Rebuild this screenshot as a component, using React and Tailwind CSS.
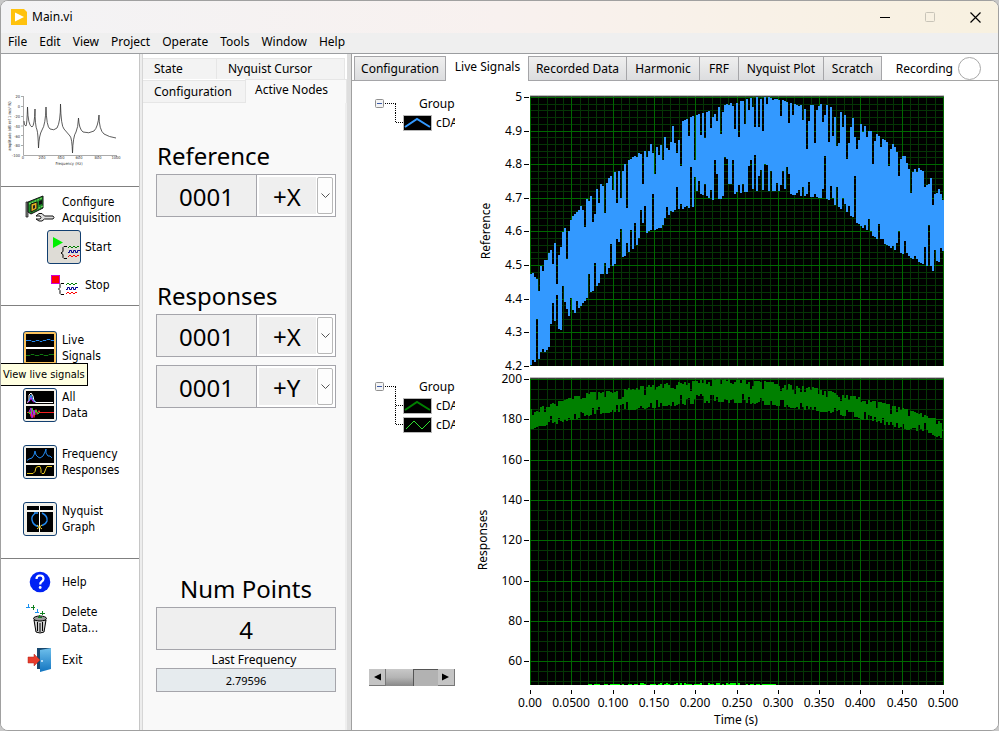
const MENUS = ["File", "Edit", "View", "Project", "Operate", "Tools", "Window", "Help"];

const MAIN_TABS = [
  { name: "Configuration", width: "w-[92px]" },
  { name: "Live Signals", width: "w-[83px]", active: true },
  { name: "Recorded Data", width: "w-[99px]" },
  { name: "Harmonic", width: "w-[74px]" },
  { name: "FRF", width: "w-[40px]" },
  { name: "Nyquist Plot", width: "w-[86px]" },
  { name: "Scratch", width: "w-[59px]" },
];

const AXES = ["+X", "+Y", "+Z", "-X", "-Y", "-Z"];

const TIME_LABELS = [
  "0.00", "0.0500", "0.100", "0.150", "0.200", "0.250",
  "0.300", "0.350", "0.400", "0.450", "0.500",
];

// envelopes: [x, top, bottom] in plot pixels
const REFERENCE_ENVELOPE = [
  [0, 178, 269], [12, 168, 260], [30, 136, 234], [50, 110, 210], [66, 92, 190],
  [84, 76, 168], [101, 62, 154], [118, 49, 136], [130, 42, 132], [141, 30, 116],
  [160, 20, 112], [180, 14, 106], [192, 8, 102], [205, 7, 98], [222, 1, 95],
  [236, 1, 95], [251, 4, 96], [267, 9, 100], [293, 8, 102], [306, 14, 110],
  [320, 21, 122], [332, 28, 132], [342, 36, 140], [363, 48, 154], [375, 61, 160],
  [400, 82, 172], [414, 100, 191],
];

const RESPONSE_ENVELOPE = [
  [0, 31, 51], [20, 26, 47], [38, 20, 43], [60, 14, 37], [84, 13, 34],
  [110, 8, 31], [150, 4, 27], [185, 1, 24], [220, 2, 26], [250, 5, 28],
  [275, 8, 32], [300, 13, 35], [318, 17, 39], [345, 23, 44], [370, 29, 51],
  [395, 37, 54], [414, 44, 62],
];

const noise = (i, seed) => {
  const v = Math.sin(i * 12.9898 + seed * 78.233) * 43758.5453;
  return v - Math.floor(v);
};

const envelopeAt = (points, x) => {
  let i = 1;
  while (i < points.length - 1 && points[i][0] < x) i++;
  const [x0, t0, b0] = points[i - 1];
  const [x1, t1, b1] = points[i];
  const k = (x - x0) / (x1 - x0);
  return [t0 + (t1 - t0) * k, b0 + (b1 - b0) * k];
};

const bandPath = (points, jitter, seed) => {
  let d = "";
  for (let x = 0; x < 414; x += 2) {
    const [top, bottom] = envelopeAt(points, x);
    const t = Math.round(top + noise(x, seed) ** 4 * jitter);
    const b = Math.round(bottom - noise(x, seed + 1) ** 4 * jitter);
    d += `M${x} ${t}h2V${b}h-2z`;
  }
  return d;
};

const Grid = ({ height, step, sub, count }) => {
  const minor = [];
  const major = [];
  for (let i = 0; i <= 50; i++) {
    const x = Math.round((i * 413) / 50);
    (i % 5 ? minor : major).push(`M${x} 0h1v${height}h-1z`);
  }
  for (let i = 0; i <= count; i++) {
    const y = 1 + Math.round((i * step) / sub);
    (i % sub ? minor : major).push(`M0 ${y}h414v1h-414z`);
  }
  return (
    <g shapeRendering="crispEdges">
      <rect width="414" height={height} fill="#000" />
      <path d={minor.join("")} fill="#053505" />
      <path d={major.join("")} fill="#006800" />
    </g>
  );
};

const YAxis = ({ labels, step }) =>
  labels.map((label, i) => {
    const y = 1 + Math.round(i * step);
    return (
      <g key={label}>
        <rect x="-6" y={y} width="5" height="1" />
        <text x="-8" y={y + 4} textAnchor="end">{label}</text>
      </g>
    );
  });

const ReferenceChart = () => (
  <svg viewBox="0 0 528 291" className="min-w-0 flex-1 self-start overflow-visible text-xs" role="img" aria-label="Reference">
    <g transform="translate(60 15)">
      <Grid height={270} step={33.6} sub={5} count={39} />
      <YAxis labels={["5", "4.9", "4.8", "4.7", "4.6", "4.5", "4.4", "4.3", "4.2"]} step={33.6} />
      <path d={bandPath(REFERENCE_ENVELOPE, 46, 3)} fill="#3399ff" shapeRendering="crispEdges" />
      <path d="M0 0H414" stroke="#777" />
      <text transform="translate(-40 135) rotate(-90)" textAnchor="middle">Reference</text>
    </g>
  </svg>
);

const ResponsesChart = () => {
  let floor = "";
  for (let x = 58; x < 246; x += 2) {
    if (noise(x, 9) > 0.35) floor += `M${x} 307h2v-${noise(x, 5) > 0.55 && x > 100 && x < 215 ? 2 : 1}h-2z`;
  }
  return (
    <svg viewBox="0 0 528 357" className="min-w-0 flex-1 self-start overflow-visible text-xs" role="img" aria-label="Responses">
      <g transform="translate(60 6)">
        <Grid height={307} step={40.3} sub={4} count={30} />
        <YAxis labels={["200", "180", "160", "140", "120", "100", "80", "60"]} step={40.3} />
        <path d={bandPath(RESPONSE_ENVELOPE, 10, 7)} fill="#008000" shapeRendering="crispEdges" />
        <path d={floor} fill="#00ff00" shapeRendering="crispEdges" />
        <path d="M0 0H414" stroke="#777" />
        <text transform="translate(-43 162) rotate(-90)" textAnchor="middle">Responses</text>
        {TIME_LABELS.map((label, i) => {
          const x = Math.round(i * 41.3);
          return (
            <g key={label}>
              <rect x={x} y="312" width="1" height="4" />
              <text x={x} y="329" textAnchor="middle">{label}</text>
            </g>
          );
        })}
        <text x="206" y="346" textAnchor="middle">Time (s)</text>
      </g>
    </svg>
  );
};

const Swatch = ({ color, zigzag, last }) => (
  <svg width="57" height="19" className="shrink-0">
    <path d={last ? "M20.5 0V10" : "M20.5 0V19"} stroke="#000" strokeDasharray="1 1" />
    <path d="M21 9.5H28" stroke="#000" strokeDasharray="1 1" />
    <rect x="28.5" y="2.5" width="28" height="15" fill="#000" stroke="#b8b8b8" />
    {zigzag ? (
      <path d="M31 14L39 6L47 14L55 6" fill="none" stroke={color} />
    ) : (
      <path d="M30 14L42 6L55 14" fill="none" stroke={color} strokeWidth="2" />
    )}
  </svg>
);

const SignalTree = ({ signals }) => (
  <div className="w-[80px] overflow-hidden">
    <div className="flex h-[19px] items-center">
      <svg width="22" height="19" className="shrink-0">
        <path d="M10 9.5H21M20.5 10V19" stroke="#000" strokeDasharray="1 1" />
        <rect x="0.5" y="5.5" width="8" height="8" rx="1" fill="#f4f4f4" stroke="#909090" />
        <path d="M2 9.5H7" stroke="#3c5aa8" />
      </svg>
      <span className="ml-[22px]">Group</span>
    </div>
    {signals.map((signal, i) => (
      <div key={signal.color} className="flex h-[19px] items-center">
        <Swatch {...signal} last={i === signals.length - 1} />
        <span className="ml-1">cDA</span>
      </div>
    ))}
  </div>
);

const ResonancePlot = () => (
  <svg viewBox="0 0 120 76" className="w-[120px]" fill="none" role="img" aria-label="Amplitude against frequency">
    <path d="M17.5 4V63.5H111M15 4.5h2M15 14.5h2M15 24.5h2M15 34h2M15 43.5h2M15 53.5h2M36.5 63v2M54.5 63v2M73.5 63v2M92.5 63v2M110.5 63v2" stroke="#aaa" />
    <path
      d="M18 29Q18 34 20 34Q21 32 21.500 15Q22 34 26 35Q28.500 34 29 17Q29 34 31 38Q32 41 32.500 56Q33 43 36 38Q39.500 33 40 15Q40.500 35 44 37Q48 39 51 36Q54.500 30 54.500 12Q55 34 58 37L64 44Q66 46 66.500 61Q67 44 70 40Q72 36 72.500 26Q73 37 77 40Q83 42 88 39Q92 35 93 23Q93 38 98 42Q103 45 110 46"
      stroke="#333"
      strokeWidth="0.800"
    />
    <g fill="#333" fontSize="4">
      <text x="14" y="6" textAnchor="end">20</text>
      <text x="14" y="16" textAnchor="end">0</text>
      <text x="14" y="26" textAnchor="end">-20</text>
      <text x="14" y="36" textAnchor="end">-40</text>
      <text x="14" y="46" textAnchor="end">-60</text>
      <text x="14" y="55" textAnchor="end">-80</text>
      <text x="14" y="65" textAnchor="end">-100</text>
      <text x="17" y="67" textAnchor="middle">0</text>
      <text x="36" y="67" textAnchor="middle">200</text>
      <text x="55" y="67" textAnchor="middle">400</text>
      <text x="73" y="67" textAnchor="middle">600</text>
      <text x="92" y="67" textAnchor="middle">800</text>
      <text x="110" y="67" textAnchor="middle">1000</text>
      <text x="63" y="73" textAnchor="middle">Frequency (Hz)</text>
      <text transform="translate(5 34) rotate(-90)" textAnchor="middle">amplitude (dB ref 1 m/s² N)</text>
    </g>
  </svg>
);

const Waves = () => (
  <g fill="none">
    <path d="M0 3L2 1L4 3L6 1L8 3L10 1L11 2" stroke="#008000" />
    <path d="M0 7.500H1.500V5.500H3.500V7.500H5.500V5.500H7.500V7.500H9.500V5.500H12" stroke="#000090" />
    <path d="M0 12L2 10L4 12L6 10L8 12L10 10L11 11" stroke="#f00" />
  </g>
);

const BoardIcon = () => (
  <svg width="30" height="30" viewBox="0 0 30 30">
    <path d="M1 7h2v15h-2z" fill="#888" stroke="#222" strokeWidth="0.800" />
    <path d="M3 7L18 1V13L6 19L3 17z" fill="#1f8a2b" stroke="#111" />
    <path d="M4 9L17 3M8 16L18 11" stroke="#6fd95a" strokeWidth="1.200" strokeDasharray="2 1" />
    <path d="M6 9L12 7V14L6 17z" fill="#e0b020" stroke="#111" />
    <path d="M8 10.500L10 10V13L8 14z" fill="#222" />
    <path d="M14 6L17 5V9L14 10z" fill="#111" />
    <path d="M11 21l3-2.500h3l2.500 2.500h8.500l1 1.500l-1 1.500h-8.500l-2.500 2h-3l-3-2h4l1-1.500l-1-1.500z" fill="#ddd" stroke="#111" />
  </svg>
);

const StartIcon = () => (
  <svg width="34" height="34" viewBox="0 0 34 34">
    <path d="M6 7L16 12.500L6 18z" fill="#00f000" />
    <path d="M20 16.500h-3l-1 1v4l-2 1.500l2 1.500v3l1 1h3" fill="none" stroke="#000" />
    <g transform="translate(21 15)"><Waves /></g>
  </svg>
);

const StopIcon = () => (
  <svg width="34" height="24" viewBox="0 0 34 24">
    <rect x="4.500" y="2.500" width="8" height="8" fill="#f00" stroke="#d000d0" />
    <path d="M17 10.500h-3l-1 1v3l-1.500 1.500l1.500 1.500v3l1 1h3" fill="none" stroke="#000" />
    <g transform="translate(19 9)"><Waves /></g>
  </svg>
);

const IconFrame = ({ active, pressed, children }) => (
  <svg width="34" height="34" viewBox="0 0 34 34" className="shrink-0">
    <rect x="0.500" y="0.500" width="33" height="33" rx="2.500" fill={active ? "#fbc35c" : pressed ? "#dedcd6" : "#f3f1ea"} stroke="#123f70" />
    {children}
  </svg>
);

const LiveIcon = () => (
  <IconFrame active>
    <path d="M3 3h28v13h-28zM3 18h28v13h-28z" fill="#000" />
    <path d="M3 16h28v2h-28z" fill="#fff" />
    <path d="M3 9.500h5l1 1h3l1-1h3l1 1h2l1-1h3l1-1h3l1 1h3" fill="none" stroke="#2288ee" />
    <path d="M3 24.500h4l1-1h3l1 1h4l1-1h3l1 1h4l1-1h5" fill="none" stroke="#117711" />
  </IconFrame>
);

const AllDataIcon = () => (
  <IconFrame>
    <path d="M3 3h28v13h-28zM3 18h28v13h-28z" fill="#000" />
    <path d="M4 14.500L6 13V7L8 5L10 8L11 13L13 14.500H30" fill="none" stroke="#fff" />
    <path d="M5 14.500L7 12L8 9L9 12L11 14.500" fill="none" stroke="#d020ff" />
    <path d="M6 13L8 7L10 12L13 14" fill="none" stroke="#3399ff" />
    <path d="M4 24.500h3l1 4l1-8l2 9l2-8l1 5l2-4l1 2h14" fill="none" stroke="#f02020" />
    <path d="M5 24l2 2l2-6l2 7l2-5l2 4l2-2" fill="none" stroke="#30e030" />
    <path d="M6 24l2-4l1 10l2-8l1 5" fill="none" stroke="#c020ff" />
  </IconFrame>
);

const FrequencyIcon = () => (
  <IconFrame>
    <path d="M3 3h28v15h-28zM3 20h28v11h-28z" fill="#000" />
    <path d="M4 15.500L6 14L9 13L11 10L12 6L13 10L15 12L17 13L20 11L22 7L23 4V8L25 11L27 11L29 13" fill="none" stroke="#2288ee" />
    <path d="M4 28.500h6l2-2l1-4l2-1h2l1 3v3l1 1h2l2-5l1-2h5" fill="none" stroke="#e8c820" />
  </IconFrame>
);

const NyquistIcon = () => (
  <IconFrame>
    <path d="M4 4h26v4h-26zM4 10h26v20h-26z" fill="#000" />
    <path d="M16.500 4V30" stroke="#fff" />
    <path d="M13 10.500Q8 14 9 18Q10 23 15 24.500M19 11Q25 14 24 19Q23 22 19 23.500M11 11h4" fill="none" stroke="#2288ee" strokeWidth="1.400" />
    <path d="M14 23l5 4M19 23l-5 4" stroke="#f0d030" />
  </IconFrame>
);

const HelpIcon = () => (
  <svg width="22" height="22" viewBox="0 0 22 22">
    <circle cx="11" cy="11" r="10.300" fill="#0022f4" />
    <path d="M7.500 8Q7.500 4.500 11 4.500Q14.500 4.500 14.500 7.700Q14.500 9.500 12.500 10.700Q11.200 11.500 11.200 13.500" fill="none" stroke="#fff" strokeWidth="2.200" />
    <circle cx="11.200" cy="16.500" r="1.400" fill="#fff" />
  </svg>
);

const DeleteIcon = () => (
  <svg width="28" height="32" viewBox="0 0 28 32">
    <path d="M2.500 0v4M0 3.500h4M11.500 5v4M9 8.500h4" stroke="#1890f0" />
    <path d="M7.500 1v5M5 3.500h4M16.500 7v4M14 9.500h5" stroke="#108020" />
    <path d="M8 16L10 28Q14 30 18 28L20 16z" fill="#d0d0d0" stroke="#000" />
    <ellipse cx="14" cy="14.500" rx="6.500" ry="2.500" fill="#999" stroke="#000" />
    <path d="M11.500 18v9M14 19v9M16.500 18v9" stroke="#000" />
    <path d="M13.500 11v3M12 13.500h4" stroke="#108020" />
  </svg>
);

const ExitIcon = () => (
  <svg width="26" height="26" viewBox="0 0 26 26">
    <defs>
      <linearGradient id="door" x2="0" y2="1">
        <stop offset="0" stopColor="#6fc0ec" />
        <stop offset="1" stopColor="#1274c0" />
      </linearGradient>
    </defs>
    <path d="M10 1h14v21h-14z" fill="#18486f" />
    <path d="M13 3L24 1V22L13 25z" fill="url(#door)" />
    <circle cx="15" cy="14" r="1" fill="#d8efff" />
    <path d="M1 10h6v-3l6 6l-6 6v-3h-6z" fill="#e83c2c" stroke="#b02418" strokeWidth="0.500" />
  </svg>
);

const SideButton = ({ icon, lines, indent }) => (
  <button type="button" className={`flex w-full items-center text-left ${indent ? "gap-1 pl-[46px]" : ""}`}>
    <span className={indent ? "flex w-[34px]" : "flex w-[61px] justify-center pl-[16px]"}>{icon}</span>
    <span className="leading-4">
      {lines.map((line) => (
        <span key={line} className="block">{line}</span>
      ))}
    </span>
  </button>
);

const Sidebar = () => (
  <nav className="w-[138px] shrink-0 bg-white font-['DejaVu_Sans_Condensed','DejaVu_Sans',sans-serif] text-xs" aria-label="Actions">
    <div className="border-b border-[#808080] pt-[38px] pb-[18px] pl-[5px]">
      <ResonancePlot />
    </div>
    <div className="border-b border-[#808080] pt-[7px] pb-2">
      <SideButton icon={<BoardIcon />} lines={["Configure", "Acquisition"]} />
      <div className="mt-1 mb-[9px]">
        <SideButton icon={<IconFrame pressed><StartIcon /></IconFrame>} lines={["Start"]} indent />
      </div>
      <SideButton icon={<StopIcon />} lines={["Stop"]} indent />
    </div>
    <div className="relative flex flex-col gap-[23px] border-b border-[#808080] pt-[25px] pb-[22px]">
      <SideButton icon={<LiveIcon />} lines={["Live", "Signals"]} />
      <SideButton icon={<AllDataIcon />} lines={["All", "Data"]} />
      <SideButton icon={<FrequencyIcon />} lines={["Frequency", "Responses"]} />
      <SideButton icon={<NyquistIcon />} lines={["Nyquist", "Graph"]} />
      <div role="tooltip" className="absolute top-[57px] -left-px border border-black bg-[#ffffe1] px-[2px] text-[11px] leading-[21px] whitespace-nowrap">
        View live signals
      </div>
    </div>
    <div className="flex flex-col gap-[11px] pt-3">
      <SideButton icon={<HelpIcon />} lines={["Help"]} />
      <SideButton icon={<DeleteIcon />} lines={["Delete", "Data..."]} />
      <SideButton icon={<ExitIcon />} lines={["Exit"]} />
    </div>
  </nav>
);

const NodeField = ({ label, node, axis }) => (
  <div className="flex h-[43px]">
    <input
      aria-label={`${label} node`}
      defaultValue={node}
      className="w-[101px] min-w-0 border border-[#a5a5ab] bg-[#efefef] pt-[2px] text-center text-2xl"
    />
    <div className="relative -ml-px flex-1 border border-[#a5a5ab] bg-white p-[2px]">
      <select
        aria-label={`${label} direction`}
        defaultValue={axis}
        className="h-full w-[57px] appearance-none bg-[#efefef] pt-[2px] pl-[14px] text-2xl"
      >
        {AXES.map((a) => (
          <option key={a}>{a}</option>
        ))}
      </select>
      <span className="pointer-events-none absolute inset-y-[2px] right-[2px] flex w-[16px] items-center justify-center rounded-xs border border-[#b8b8b8] bg-[#fdfdfd]">
        <svg width="9" height="5" fill="none" stroke="#555">
          <path d="M0.500 0.500L4.500 4.500L8.500 0.500" />
        </svg>
      </span>
    </div>
  </div>
);

const NodePanel = () => (
  <section className="flex w-[204px] shrink-0 flex-col bg-[#f9f9f9]">
    <div role="tablist" className="bg-white pt-[4px]">
      <div className="flex h-[21px] pr-[2px]">
        <button role="tab" type="button" className="w-[74px] border-t border-r border-[#e6e6e6] bg-[#f3f3f3] pl-[11px] text-left">State</button>
        <button role="tab" type="button" className="flex-1 border-t border-r border-[#e6e6e6] bg-[#f3f3f3] pl-[11px] text-left">Nyquist Cursor</button>
      </div>
      <div className="flex h-[24px] items-end">
        <button role="tab" type="button" className="h-[23px] w-[102px] border-y border-[#e6e6e6] bg-[#f3f3f3] pl-[11px] text-left">Configuration</button>
        <button role="tab" type="button" aria-selected="true" className="h-full flex-1 border-x border-t border-[#e6e6e6] bg-[#f9f9f9] pr-[2px] pb-[3px] pl-[9px] text-left">Active Nodes</button>
      </div>
    </div>
    <div className="flex flex-1 flex-col border-r-2 border-[#eeeeee] pt-[37px] pr-[9px] pb-[38px] pl-[13px]">
      <h2 className="mb-[2px] pl-px text-2xl leading-8">Reference</h2>
      <NodeField label="Reference" node="0001" axis="+X" />
      <h2 className="mt-[63px] mb-[2px] pl-px text-2xl leading-8">Responses</h2>
      <div className="flex flex-col gap-2">
        <NodeField label="Response 1" node="0001" axis="+X" />
        <NodeField label="Response 2" node="0001" axis="+Y" />
      </div>
      <label htmlFor="points" className="mt-auto mb-[2px] text-center text-2xl leading-8">Num Points</label>
      <input id="points" readOnly value="4" className="h-[43px] w-full border border-[#a5a5ab] bg-[#efefef] pt-[2px] text-center text-2xl" />
      <label htmlFor="frequency" className="mt-[2px] pl-4 text-center leading-4">Last Frequency</label>
      <input id="frequency" readOnly value="2.79596" className="h-[24px] w-full border border-[#a5a5ab] bg-[#e6ebee] text-center text-[11px]" />
    </div>
  </section>
);

const MainPanel = () => (
  <main className="flex min-w-0 flex-1 flex-col bg-white">
    <div className="flex items-end border-b border-[#a5a5a5] pt-[2px]">
      <div role="tablist" className="-mb-px flex pl-[2px]">
        {MAIN_TABS.map((tab) => (
          <button
            key={tab.name}
            type="button"
            role="tab"
            aria-selected={!!tab.active}
            className={`h-[25px] shrink-0 whitespace-nowrap ${tab.width} ${
              tab.active
                ? "bg-white pb-[3px]"
                : "-ml-px border border-[#a5a5a8] bg-linear-to-b from-[#efefef] to-[#dcdddf] first:ml-0"
            }`}
          >
            {tab.name}
          </button>
        ))}
      </div>
      <div className="ml-auto flex items-center gap-px pr-[17px]">
        <span className="mr-1">Recording</span>
        <span className="h-[23px] w-[23px] rounded-full border border-[#a8a8a8] bg-white" />
      </div>
    </div>
    <div className="flex">
      <div className="w-[118px] shrink-0 pt-[13px] pl-[23px]">
        <SignalTree signals={[{ color: "#3399ff" }]} />
      </div>
      <ReferenceChart />
    </div>
    <div className="flex flex-1">
      <div className="flex w-[118px] shrink-0 flex-col pt-[5px] pb-[44px] pl-[23px]">
        <SignalTree signals={[{ color: "#008000" }, { color: "#30e030", zigzag: true }]} />
        <div className="mt-auto -ml-[6px] flex h-[17px] w-[86px]">
          <button type="button" aria-label="Scroll left" className="flex w-[17px] items-center justify-center border-r border-b border-[#777] bg-[#c4c4c4]">
            <svg width="8" height="8"><path d="M8 0.500V7.500L1 4z" /></svg>
          </button>
          <div className="w-[28px] border-r border-[#555] bg-linear-to-b from-[#c8c8c8] via-[#b4b4b4] to-[#888]" />
          <div className="flex-1 border-t border-[#555] bg-[#b2b2b2]" />
          <button type="button" aria-label="Scroll right" className="flex w-[17px] items-center justify-center border-r border-b border-[#777] bg-[#c4c4c4]">
            <svg width="8" height="8"><path d="M0 0.500V7.500L7 4z" /></svg>
          </button>
        </div>
      </div>
      <ResponsesChart />
    </div>
  </main>
);

const TitleBar = () => (
  <header className="flex h-[32px] items-center bg-linear-to-r from-[#f3f3f5] via-[#f8f1ef] to-[#f8f1e0] pl-[10px]">
    <svg width="16" height="16">
      <path d="M0 0H13L16 3V16H0z" fill="#ffc20e" />
      <path d="M4 3.500L13 8L4 12.500z" fill="#fff" />
    </svg>
    <h1 className="ml-[5px] text-xs">Main.vi</h1>
    <div className="ml-auto flex items-center pr-[17px]">
      <button type="button" aria-label="Minimize" className="mr-[35px]">
        <svg width="10" height="10"><path d="M0 5.500H10" stroke="#000" /></svg>
      </button>
      <button type="button" aria-label="Maximize" disabled className="mr-[35px]">
        <svg width="10" height="10"><rect x="0.500" y="0.500" width="9" height="9" rx="1" fill="none" stroke="#c8c4b8" /></svg>
      </button>
      <button type="button" aria-label="Close">
        <svg width="11" height="11"><path d="M0.500 0.500L10.500 10.500M10.500 0.500L0.500 10.500" stroke="#000" strokeWidth="1.200" /></svg>
      </button>
    </div>
  </header>
);

export default function App() {
  return (
    <div className="min-h-screen bg-[#c8c8c8] font-['Noto_Sans',sans-serif] text-xs text-black">
      <div className="flex min-h-screen flex-col overflow-hidden rounded-lg border border-[#a0a0a0] bg-white">
        <TitleBar />
        <div className="flex h-[21px] items-center gap-3 border-b border-[#9b9da0] bg-[#efefef] pb-[2px] pl-[7px]">
          {MENUS.map((menu) => (
            <button key={menu} type="button">{menu}</button>
          ))}
        </div>
        <div className="flex flex-1">
          <Sidebar />
          <div className="w-[4px] shrink-0 border-x border-l-[#c6c6c6] border-r-[#d6d6d6] bg-[#ededed]" />
          <NodePanel />
          <div className="w-[5px] shrink-0 border-r border-[#a0a0a0] bg-[#dedede]" />
          <MainPanel />
        </div>
      </div>
    </div>
  );
}
